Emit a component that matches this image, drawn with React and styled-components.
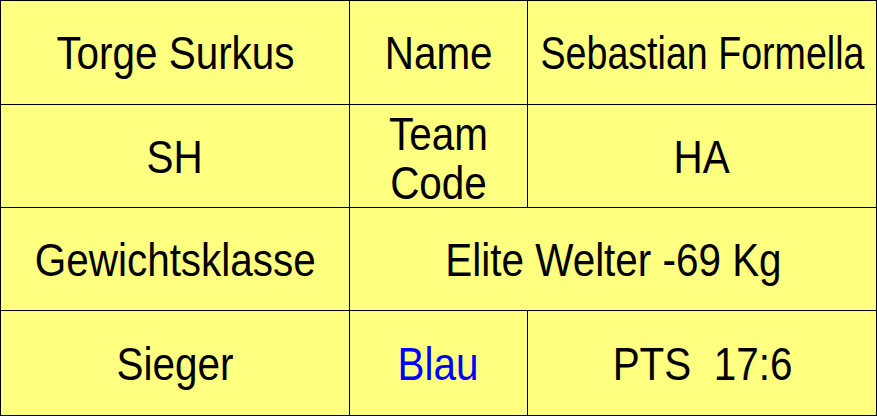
import React from 'react'
import styled, { createGlobalStyle } from 'styled-components'

const GlobalStyle = createGlobalStyle`
  html, body {
    margin: 0;
    padding: 0;
    background: #ffffff;
  }
`

const rows = [
  [{ text: 'Torge Surkus' }, { text: 'Name' }, { text: 'Sebastian Formella', squeeze: 0.8 }],
  [{ text: 'SH' }, { text: 'Team\nCode', stacked: true }, { text: 'HA' }],
  [{ text: 'Gewichtsklasse' }, { text: 'Elite Welter -69 Kg', span: 2 }],
  [{ text: 'Sieger' }, { text: 'Blau', color: '#0000ff' }, { text: 'PTS  17:6' }],
]

function App() {
  return (
    <>
      <GlobalStyle />
      <Board>
        {rows.map((row, r) =>
          row.map((cell, c) => (
            <Cell key={`${r}-${c}`} $span={cell.span}>
              <Label $color={cell.color} $stacked={cell.stacked} $squeeze={cell.squeeze}>
                {cell.text}
              </Label>
            </Cell>
          ))
        )}
      </Board>
    </>
  )
}
export default App

const Board = styled.div`
  display: grid;
  grid-template-columns: 349px 178px 349px;
  grid-template-rows: 104px 103px 103px 105px;
  width: 877px;
  height: 416px;
  box-sizing: border-box;
  border-top: 1px solid #000;
  border-left: 1px solid #000;
  background: #ffff80;
`

const Cell = styled.div`
  grid-column: span ${(p) => p.$span || 1};
  display: flex;
  align-items: center;
  justify-content: center;
  border-right: 1px solid #000;
  border-bottom: 1px solid #000;
  overflow: hidden;
`

const Label = styled.span`
  display: inline-block;
  font-family: 'Liberation Sans', Arial, sans-serif;
  font-size: 47px;
  line-height: ${(p) => (p.$stacked ? '49px' : '1')};
  color: ${(p) => p.$color || '#000'};
  white-space: pre;
  text-align: center;
  transform: scaleX(${(p) => p.$squeeze || 0.86});
  margin-top: ${(p) => (p.$stacked ? '4px' : '0')};
`
